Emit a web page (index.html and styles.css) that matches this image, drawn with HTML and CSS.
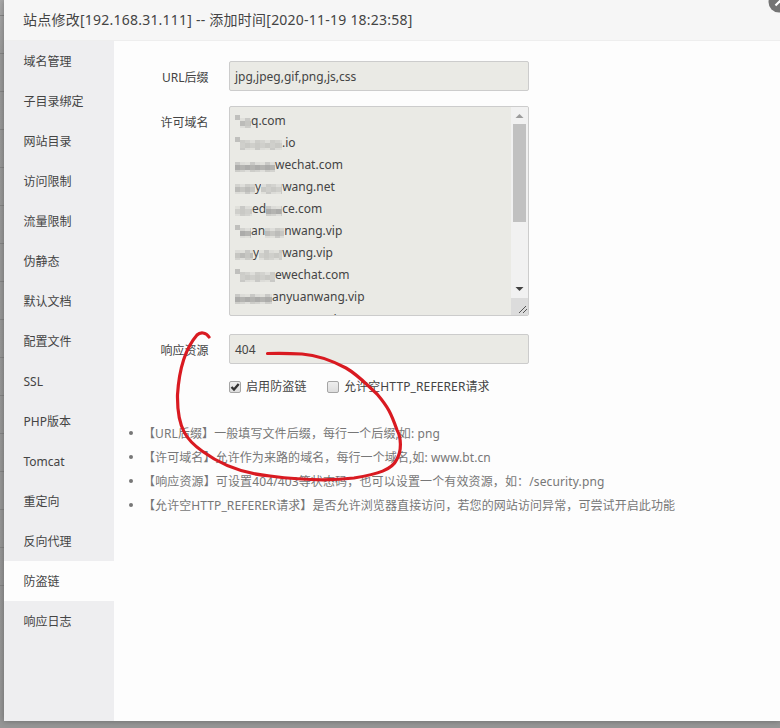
FILE: index.html
```html
<!DOCTYPE html>
<html lang="zh-CN">
<head>
<meta charset="utf-8">
<title>站点修改</title>
<link rel="stylesheet" href="styles.css">
</head>
<body>
<div class="dialog">
  <header class="title"><span>站点修改[192.168.31.111] -- 添加时间[2020-11-19 18:23:58]</span></header>
  <div class="body">
    <nav class="menu">
      <a>域名管理</a><a>子目录绑定</a><a>网站目录</a><a>访问限制</a><a>流量限制</a><a>伪静态</a><a>默认文档</a><a>配置文件</a><a>SSL</a><a>PHP版本</a><a>Tomcat</a><a>重定向</a><a>反向代理</a><a class="active">防盗链</a><a>响应日志</a>
    </nav>
    <main class="content">
      <div class="row"><label>URL后缀</label><div class="input">jpg,jpeg,gif,png,js,css</div></div>
      <div class="row area-row"><label>许可域名</label>
        <div class="area">
          <div class="lines" id="lines"></div>
          <div class="scroll">
            <svg width="17" height="208" viewBox="0 0 17 208">
              <path fill="#f1f1f1" d="M0 0h17v208H0z"/>
              <path fill="#c1c1c1" d="M2 17h13v98H2z"/>
              <path fill="#9b9b9b" d="M8.500 7l4 4h-8z"/>
              <path fill="#404040" d="M4.500 180h8l-4 4z"/>
              <path fill="#dcdcdc" d="M0 191h17v17H0z"/>
              <path stroke="#555" fill="none" d="M8 206l7-7M12 206l4-4"/>
            </svg>
          </div>
        </div>
      </div>
      <div class="row res-row"><label>响应资源</label><div class="input">404</div></div>
      <div class="checks">
        <span class="box"><svg width="12" height="12" viewBox="0 0 12 12"><path d="M2.500 6l2.500 2.600L9.700 3" fill="none" stroke="#333" stroke-width="2.300"/></svg></span><span class="c1">启用防盗链</span>
        <span class="box"></span><span class="c2">允许空HTTP_REFERER请求</span>
      </div>
      <ul class="tips">
        <li><span class="t1">【URL后缀】一般填写文件后缀，每行一个后缀,如: png</span></li>
        <li><span class="t2">【许可域名】允许作为来路的域名，每行一个域名,如: www.bt.cn</span></li>
        <li><span class="t3">【响应资源】可设置404/403等状态码，也可以设置一个有效资源，如：/security.png</span></li>
        <li><span class="t4">【允许空HTTP_REFERER请求】是否允许浏览器直接访问，若您的网站访问异常，可尝试开启此功能</span></li>
      </ul>
    </main>
  </div>
</div>
<svg class="close" width="12" height="14" viewBox="0 0 12 14"><circle cx="11" cy="2" r="10.500" fill="#747474"/><path d="M7.500 5.500l8-8" stroke="#fff" stroke-width="2.200"/></svg>
<svg class="mark" width="780" height="728" viewBox="0 0 780 728" fill="none" stroke="#d91a21" stroke-width="3.200" stroke-linecap="round" stroke-linejoin="round">
  <path d="M209 337C206 332 200 332 197 335C184 350 179 370 177.500 395C177 430 188 441 202 451C225 468 247 474 270 476C300 480 330 481 354 478C378 474 392 470 397 459C402 450 401 437 397 430C391 413 388 407 377 394C364 382 358 375 346 368C329 359 315 355 302 354Q285 353 267.500 353.500"/>
</svg>
<script src="rows.js"></script>
</body>
</html>
```

FILE: styles.css
```css
* { box-sizing: border-box; }
html, body { margin: 0; height: 728px; overflow: hidden; }
body {
  background:
    repeating-linear-gradient(to bottom, transparent 0 15px, #858585 15px 16px, transparent 16px 38px) 0 0 / 4px 600px no-repeat,
    linear-gradient(to bottom, #aaa, #999 60px, #969696);
  font: 12px/20px "Noto Sans", "Noto Sans CJK SC", sans-serif;
  color: #444;
  position: relative;
}
.dialog { margin-left: 4px; width: 776px; height: 721px; background: #fdfdfd; box-shadow: 0 0 6px rgba(0, 0, 0, .3); }
.title { height: 41px; padding-left: 19px; background: #f6f6f6; border-bottom: 1px solid #eee; font-size: 14px; line-height: 40px; letter-spacing: .23px; white-space: nowrap; }
.body { display: flex; height: 680px; }
.menu { width: 110px; background: #eeeef0; }
.menu a { display: block; height: 40px; line-height: 42px; padding-left: 19.5px; }
.menu .active { background: #fdfdfd; }
.content { flex: 1; padding-top: 20px; }
.row { display: flex; height: 30px; }
.row label { width: 94.5px; margin-right: 20.5px; text-align: right; line-height: 34px; }
.input { width: 300px; height: 30px; border: 1px solid #ccc; border-radius: 2px; background: #eaeae5; padding-left: 5px; line-height: 30px; }
.area-row { height: 210px; margin-top: 15px; }
.area { width: 300px; height: 210px; border: 1px solid #ccc; border-radius: 2px; background: #eaeae5; display: flex; overflow: hidden; }
.lines { width: 281px; padding: 3px 0 0 5px; overflow: hidden; }
.line { display: flex; height: 22px; line-height: 22px; white-space: pre; }
.line svg { flex: none; margin-top: 5px; }
.scroll { width: 17px; height: 208px; }
.res-row { margin-top: 18px; }
.checks { display: flex; align-items: center; margin: 13px 0 0 115px; height: 20px; line-height: 22px; white-space: nowrap; }
.box { width: 12px; height: 12px; border: 1px solid #a5a5a5; border-radius: 2px; background: linear-gradient(#eee, #ddd); margin-right: 5px; display: flex; }
.box svg { margin: -1px; flex: none; }
.c1 { width: 81px; letter-spacing: .1px; }
.c2 { letter-spacing: .12px; }
.tips { margin: 24px 0 0; padding: 0 0 0 35px; color: #777; line-height: 25px; list-style: none; }
.tips li { height: 24px; white-space: nowrap; display: flex; }
.tips li::before { content: ""; width: 4px; height: 4px; border-radius: 2px; background: #777; margin: 10px 10px 0 -20px; }
.t1, .t2, .t4 { letter-spacing: .09px; }
.t3 { letter-spacing: .13px; }
.close { position: absolute; right: 0; top: 0; }
.mark { position: absolute; left: 0; top: 0; }
```

FILE: rows.js
```js
// Masked runs are numbers (width in px); readable runs are strings.
const rows = [
  [16, "q.com"],
  [47, ".io"],
  [40, "wechat.com"],
  [20, "y", 21, "wang.net"],
  [17, "ed", 16, "ce.com"],
  [16, "an", 19, "nwang.vip"],
  [18, "y", 23, "wang.vip"],
  [40, "ewechat.com"],
  [37, "anyuanwang.vip"],
  [99, "."]
];
const middle = ["#c6c6c2", "#b4b4b1", "#cfcfcb", "#bcbcb9", "#acacaa", "#c9c9c5"];
const edge = ["#dcdcd8", "#cdcdc9", "#e0e0db", "#d3d3cf", "#c9c9c6", "#dededa"];
const ns = "http://www.w3.org/2000/svg";

function addCell(svg, x, y, h, fill) {
  const q = document.createElementNS(ns, "rect");
  q.setAttribute("x", x);
  q.setAttribute("y", y);
  q.setAttribute("width", 5);
  q.setAttribute("height", h);
  q.setAttribute("fill", fill);
  svg.append(q);
}

rows.forEach((parts, r) => {
  const line = document.createElement("div");
  line.className = "line";
  parts.forEach((part, p) => {
    if (typeof part === "string") {
      const s = document.createElement("span");
      s.textContent = r === 9 ? "\u02d9" : part;
      line.append(s);
      return;
    }
    const svg = document.createElementNS(ns, "svg");
    svg.setAttribute("width", part);
    svg.setAttribute("height", 15);
    const star = p === 0 && [0, 1, 5, 7].includes(r);
    for (let x = 0, i = 0; x < part && r < 9; x += 5, i++) {
      if (star && i === 0) {
        addCell(svg, x, 0, 5, "#c0c0bd");
        continue;
      }
      const k = i * 2 + r * 5 + p;
      addCell(svg, x, 3, 3, edge[k % 6]);
      addCell(svg, x, 6, 5, middle[(k + i) % 6]);
      addCell(svg, x, 11, 2, edge[(k + 3) % 6]);
    }
    line.append(svg);
  });
  document.getElementById("lines").append(line);
});
```
